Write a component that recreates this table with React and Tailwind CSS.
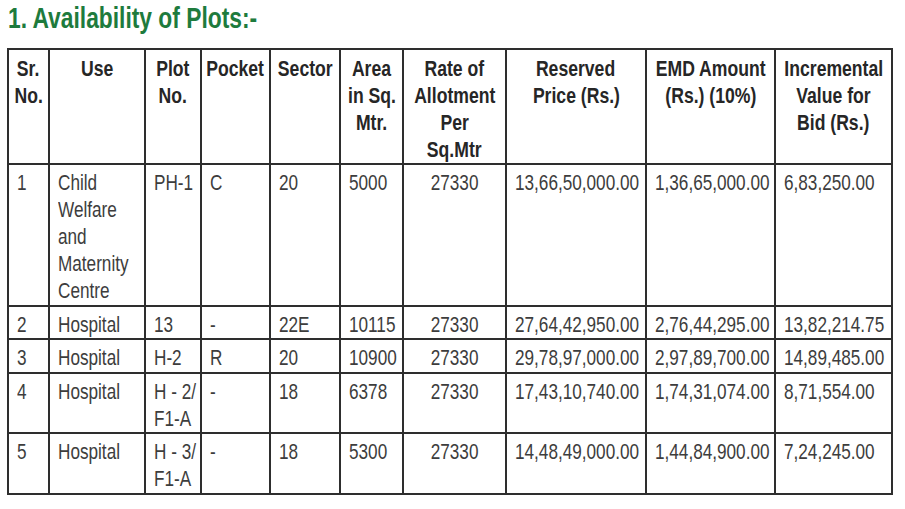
import React from "react";

const rows = [
  {
    h: "h-[142px]",
    sr: "1",
    use: ["Child", "Welfare", "and", "Maternity", "Centre"],
    plot: ["PH-1"],
    pocket: "C",
    sector: "20",
    area: "5000",
    rate: "27330",
    price: "13,66,50,000.00",
    emd: "1,36,65,000.00",
    inc: "6,83,250.00",
  },
  {
    h: "h-[33px]",
    sr: "2",
    use: ["Hospital"],
    plot: ["13"],
    pocket: "-",
    sector: "22E",
    area: "10115",
    rate: "27330",
    price: "27,64,42,950.00",
    emd: "2,76,44,295.00",
    inc: "13,82,214.75",
  },
  {
    h: "h-[34px]",
    sr: "3",
    use: ["Hospital"],
    plot: ["H-2"],
    pocket: "R",
    sector: "20",
    area: "10900",
    rate: "27330",
    price: "29,78,97,000.00",
    emd: "2,97,89,700.00",
    inc: "14,89,485.00",
  },
  {
    h: "h-[60px]",
    sr: "4",
    use: ["Hospital"],
    plot: ["H - 2/", "F1-A"],
    pocket: "-",
    sector: "18",
    area: "6378",
    rate: "27330",
    price: "17,43,10,740.00",
    emd: "1,74,31,074.00",
    inc: "8,71,554.00",
  },
  {
    h: "h-[61px]",
    sr: "5",
    use: ["Hospital"],
    plot: ["H - 3/", "F1-A"],
    pocket: "-",
    sector: "18",
    area: "5300",
    rate: "27330",
    price: "14,48,49,000.00",
    emd: "1,44,84,900.00",
    inc: "7,24,245.00",
  },
];

const headers = [
  ["Sr.", "No."],
  ["Use"],
  ["Plot", "No."],
  ["Pocket"],
  ["Sector"],
  ["Area", "in Sq.", "Mtr."],
  ["Rate of", "Allotment", "Per", "Sq.Mtr"],
  ["Reserved", "Price (Rs.)"],
  ["EMD Amount", "(Rs.) (10%)"],
  ["Incremental", "Value for", "Bid (Rs.)"],
];

const widths = [41, 96, 56, 69, 70, 63, 103, 140, 129, 117];

// condensed look: the DIN-style face isn't installed, so squeeze Liberation Sans
const Left = ({ items }) => (
  <div className="flex flex-col items-start">
    {items.map((t, i) => (
      <span key={i} className="inline-block whitespace-nowrap origin-left scale-x-[0.78]">
        {t}
      </span>
    ))}
  </div>
);

const Center = ({ items, scale = "scale-x-[0.8]" }) => (
  <div className="flex flex-col items-center">
    {items.map((t, i) => (
      <span key={i} className={`inline-block whitespace-nowrap origin-center ${scale}`}>
        {t}
      </span>
    ))}
  </div>
);

const App = () => {
  const td = "border-2 border-[#2e2e2e] align-top pt-[4px] pl-2 pr-0";
  return (
    <div
      className="bg-white w-[905px] h-[509px] overflow-hidden text-[#3d3d3d]"
      style={{ fontFamily: '"Liberation Sans", Arial, sans-serif' }}
    >
      <div className="pl-[8px] pt-[1px] h-[48px] text-[30px] leading-[34px] font-bold text-[#1e7b3d]">
        <span className="inline-block whitespace-nowrap origin-left scale-x-[0.76]">
          1. Availability of Plots:-
        </span>
      </div>
      <table className="ml-[7px] table-fixed border-collapse w-[884px] text-[22px] leading-[27px]">
        <colgroup>
          {widths.map((w, i) => (
            <col key={i} style={{ width: w }} />
          ))}
        </colgroup>
        <thead>
          <tr className="h-[114px]">
            {headers.map((h, i) => (
              <th
                key={i}
                className="border-2 border-[#2e2e2e] align-top pt-[5px] px-0 font-bold text-[#262626]"
              >
                <Center items={h} />
              </th>
            ))}
          </tr>
        </thead>
        <tbody>
          {rows.map((r) => (
            <tr key={r.sr} className={r.h}>
              <td className={td}>
                <Left items={[r.sr]} />
              </td>
              <td className={td}>
                <Left items={r.use} />
              </td>
              <td className={td}>
                <Left items={r.plot} />
              </td>
              <td className={td}>
                <Left items={[r.pocket]} />
              </td>
              <td className={td}>
                <Left items={[r.sector]} />
              </td>
              <td className={td}>
                <Left items={[r.area]} />
              </td>
              <td className="border-2 border-[#2e2e2e] align-top pt-[4px] px-0">
                <Center items={[r.rate]} scale="scale-x-[0.78]" />
              </td>
              <td className={td}>
                <Left items={[r.price]} />
              </td>
              <td className={td}>
                <Left items={[r.emd]} />
              </td>
              <td className={td}>
                <Left items={[r.inc]} />
              </td>
            </tr>
          ))}
        </tbody>
      </table>
    </div>
  );
};

export default App;
